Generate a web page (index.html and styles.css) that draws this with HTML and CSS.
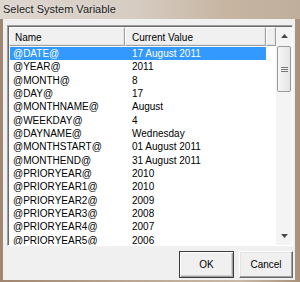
FILE: index.html
```html
<!DOCTYPE html>
<html lang="en">
<head>
    <meta charset="UTF-8">
    <title>Select System Variable</title>
    <link rel="stylesheet" href="styles.css">
</head>
<body>
    <div class="window">
        <div class="titlebar">Select System Variable</div>
        <div class="client">
            <div class="listbox">
                <div class="list">
                    <div class="header">
                        <div class="col-name">Name</div>
                        <div class="col-value">Current Value</div>
                        <div class="col-filler"></div>
                    </div>
                    <div class="rows">
                        <div class="row selected"><span class="name">@DATE@</span><span class="value">17 August 2011</span></div>
                        <div class="row"><span class="name">@YEAR@</span><span class="value">2011</span></div>
                        <div class="row"><span class="name">@MONTH@</span><span class="value">8</span></div>
                        <div class="row"><span class="name">@DAY@</span><span class="value">17</span></div>
                        <div class="row"><span class="name">@MONTHNAME@</span><span class="value">August</span></div>
                        <div class="row"><span class="name">@WEEKDAY@</span><span class="value">4</span></div>
                        <div class="row"><span class="name">@DAYNAME@</span><span class="value">Wednesday</span></div>
                        <div class="row"><span class="name">@MONTHSTART@</span><span class="value">01 August 2011</span></div>
                        <div class="row"><span class="name">@MONTHEND@</span><span class="value">31 August 2011</span></div>
                        <div class="row"><span class="name">@PRIORYEAR@</span><span class="value">2010</span></div>
                        <div class="row"><span class="name">@PRIORYEAR1@</span><span class="value">2010</span></div>
                        <div class="row"><span class="name">@PRIORYEAR2@</span><span class="value">2009</span></div>
                        <div class="row"><span class="name">@PRIORYEAR3@</span><span class="value">2008</span></div>
                        <div class="row"><span class="name">@PRIORYEAR4@</span><span class="value">2007</span></div>
                        <div class="row"><span class="name">@PRIORYEAR5@</span><span class="value">2006</span></div>
                    </div>
                </div>
                <div class="scrollbar">
                    <div class="arrow">
                        <svg width="7" height="4" viewBox="0 0 7 4"><path d="M0 4 L3.5 0 L7 4 Z" fill="#4a4a4a"/></svg>
                    </div>
                    <div class="thumb">
                        <span class="grip"></span>
                        <span class="grip"></span>
                        <span class="grip"></span>
                    </div>
                    <div class="track"></div>
                    <div class="arrow">
                        <svg width="7" height="4" viewBox="0 0 7 4"><path d="M0 0 L7 0 L3.5 4 Z" fill="#4a4a4a"/></svg>
                    </div>
                </div>
            </div>
            <div class="buttons">
                <button class="btn default">OK</button>
                <button class="btn">Cancel</button>
            </div>
        </div>
    </div>
</body>
</html>
```

FILE: styles.css
```css
* {
    box-sizing: border-box;
}
body, html {
    margin: 0;
    padding: 0;
    width: 300px;
    height: 282px;
    overflow: hidden;
    font-family: "Liberation Sans", Arial, sans-serif;
}
.window {
    width: 300px;
    height: 282px;
    display: flex;
    flex-direction: column;
    padding: 0 5px 2px 3px;
    background: linear-gradient(90deg, #a08670 0%, #b8a490 40%, #c9b8a6 80%, #a8917b 100%);
}
.titlebar {
    height: 19px;
    margin: 0 -5px 0 -3px;
    padding: 3px 0 0 3px;
    font-size: 11px;
    color: #1c1c1c;
    text-shadow: 0 0 4px rgba(255, 255, 255, 0.6);
    background: linear-gradient(90deg, #ddd6cf 0%, #d6ccc2 45%, #c7b5a2 75%, #bfae9c 100%);
}
.client {
    flex: 1;
    display: flex;
    flex-direction: column;
    background-color: #f0f0f0;
    padding: 6px 2px 2px 4px;
}
.listbox {
    height: 221px;
    display: flex;
    border: 1px solid;
    border-color: #a0a0a0 #ffffff #ffffff #a0a0a0;
    background-color: #ffffff;
}
.list {
    flex: 1;
    display: flex;
    flex-direction: column;
    border-left: 1px solid #696969;
    border-top: 1px solid #696969;
    overflow: hidden;
}
.header {
    height: 19px;
    display: flex;
    font-size: 10px;
    color: #000;
}
.header > div {
    background-color: #f0f0f0;
    border-top: 1px solid #ffffff;
    border-left: 1px solid #ffffff;
    border-right: 1px solid #a0a0a0;
    border-bottom: 1px solid #a0a0a0;
    box-shadow: inset -1px -1px 0 #e3e3e3;
    padding: 4px 0 0 5px;
}
.col-name {
    width: 116px;
}
.col-value {
    width: 141px;
    padding-left: 6px !important;
}
.col-filler {
    flex: 1;
}
.rows {
    flex: 1;
    overflow: hidden;
    padding-top: 1px;
}
.row {
    height: 13.33px;
    display: flex;
    align-items: center;
    font-size: 10px;
    color: #000;
    width: 256px;
    margin-left: 1px;
}
.row.selected {
    background-color: #3399ff;
    color: #ffffff;
}
.name {
    width: 118px;
    padding-left: 3px;
}
.value {
    padding-left: 4px;
}
.scrollbar {
    width: 16px;
    display: flex;
    flex-direction: column;
    background-color: #f4f4f4;
    border-top: 1px solid #696969;
}
.arrow {
    height: 18px;
    display: flex;
    align-items: center;
    justify-content: center;
    background-color: #f4f4f4;
}
.thumb {
    height: 46px;
    margin: 1px 1px 0 1px;
    display: flex;
    flex-direction: column;
    align-items: center;
    justify-content: center;
    gap: 1px;
    border: 1px solid #9a9a9a;
    border-radius: 2px;
    background: linear-gradient(90deg, #f6f6f6, #e4e4e4);
}
.grip {
    width: 7px;
    height: 1px;
    background-color: #7a7a7a;
}
.track {
    flex: 1;
}
.buttons {
    margin-top: auto;
    display: flex;
    justify-content: flex-end;
    gap: 5px;
}
.btn {
    height: 27px;
    width: 54px;
    padding: 0;
    font-family: "Liberation Sans", Arial, sans-serif;
    font-size: 10px;
    color: #000;
    background-color: #f0f0f0;
    border: 1px solid;
    border-color: #ffffff #696969 #696969 #ffffff;
    box-shadow: inset -1px -1px 0 #a0a0a0, inset 1px 1px 0 #e3e3e3;
}
.btn.default {
    width: 55px;
    border-color: #3c3c3c;
    box-shadow: inset 1px 1px 0 #ffffff, inset -1px -1px 0 #a0a0a0, inset -2px -2px 0 #d0d0d0;
}
```
